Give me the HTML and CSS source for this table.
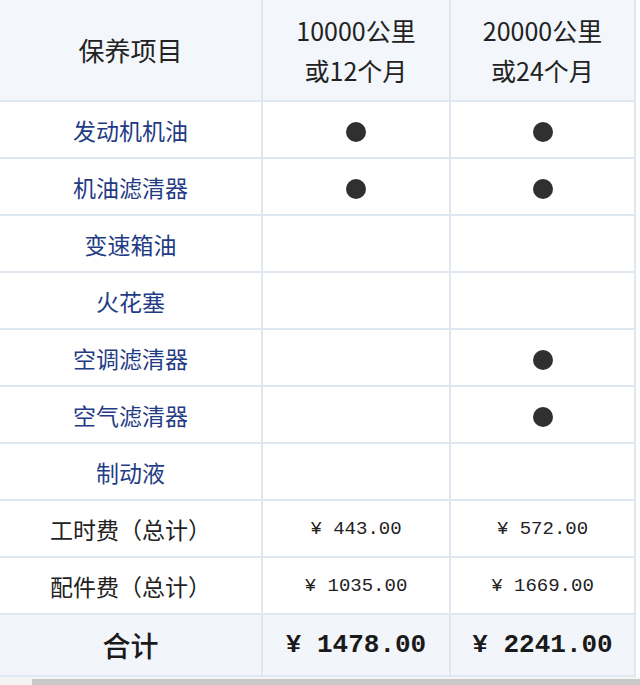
FILE: index.html
```html
<!DOCTYPE html>
<html lang="zh">
<head>
<meta charset="utf-8">
<link rel="stylesheet" href="styles.css">
</head>
<body>
<div class="page">
  <table class="maint">
    <colgroup>
      <col class="c1"><col class="c2"><col class="c3">
    </colgroup>
    <thead>
      <tr class="head">
        <th class="h-label">保养项目</th>
        <th>10000公里<br>或12个月</th>
        <th>20000公里<br>或24个月</th>
      </tr>
    </thead>
    <tbody>
      <tr><td class="item">发动机机油</td><td><span class="dot"></span></td><td><span class="dot"></span></td></tr>
      <tr><td class="item">机油滤清器</td><td><span class="dot"></span></td><td><span class="dot"></span></td></tr>
      <tr><td class="item">变速箱油</td><td></td><td></td></tr>
      <tr><td class="item">火花塞</td><td></td><td></td></tr>
      <tr><td class="item">空调滤清器</td><td></td><td><span class="dot"></span></td></tr>
      <tr><td class="item">空气滤清器</td><td></td><td><span class="dot"></span></td></tr>
      <tr><td class="item">制动液</td><td></td><td></td></tr>
      <tr><td class="fee">工时费（总计）</td><td class="price">¥ 443.00</td><td class="price">¥ 572.00</td></tr>
      <tr><td class="fee">配件费（总计）</td><td class="price">¥ 1035.00</td><td class="price">¥ 1669.00</td></tr>
      <tr class="total"><td class="total-label">合计</td><td class="total-price">¥ 1478.00</td><td class="total-price">¥ 2241.00</td></tr>
    </tbody>
  </table>
  <div class="scroll"><div class="scroll-bar"></div></div>
</div>
</body>
</html>
```

FILE: styles.css
```css
html, body {
  margin: 0;
  padding: 0;
  background: #ffffff;
}
.page {
  width: 640px;
  height: 685px;
  overflow: hidden;
  display: flex;
  flex-direction: column;
  background: #ffffff;
}
.maint {
  border-collapse: collapse;
  table-layout: fixed;
  width: 635px;
  font-family: "Noto Sans CJK SC", "Noto Sans", sans-serif;
  color: #222222;
}
.c1 { width: 262px; }
.c2 { width: 188px; }
.c3 { width: 185px; }
.maint th, .maint td {
  border: 2px solid #dfe7f1;
  text-align: center;
  vertical-align: middle;
  padding: 0;
  height: 55px;
}
.maint tr > :first-child { border-left: none; }
.maint thead tr > * { border-top: none; }
.head th {
  height: 100px;
  background: #f3f6fa;
  font-weight: 400;
  font-size: 25px;
  line-height: 40px;
  color: #222222;
}
.head .h-label {
  font-size: 26px;
}
.item {
  color: #1f3c85;
  font-size: 23px;
}
.fee {
  font-size: 23px;
  color: #222222;
}
.dot {
  display: inline-block;
  width: 20px;
  height: 20px;
  border-radius: 50%;
  background: #303030;
  vertical-align: middle;
}
.price {
  font-family: "Liberation Mono", "DejaVu Sans Mono", monospace;
  font-size: 19px;
  color: #222222;
}
.total td {
  height: 60px;
  background: #f2f5fa;
}
.total-label {
  font-size: 28px;
  font-weight: 500;
  color: #1a1a1a;
}
.total-price {
  font-family: "Liberation Mono", "DejaVu Sans Mono", monospace;
  font-weight: 700;
  font-size: 26px;
  color: #1a1a1a;
}
.scroll {
  flex: 1;
  display: flex;
  align-items: flex-end;
  background: #f4f4f4;
  padding-left: 32px;
}
.scroll-bar {
  flex: 1;
  height: 6px;
  background: #c9c9c9;
}
```
